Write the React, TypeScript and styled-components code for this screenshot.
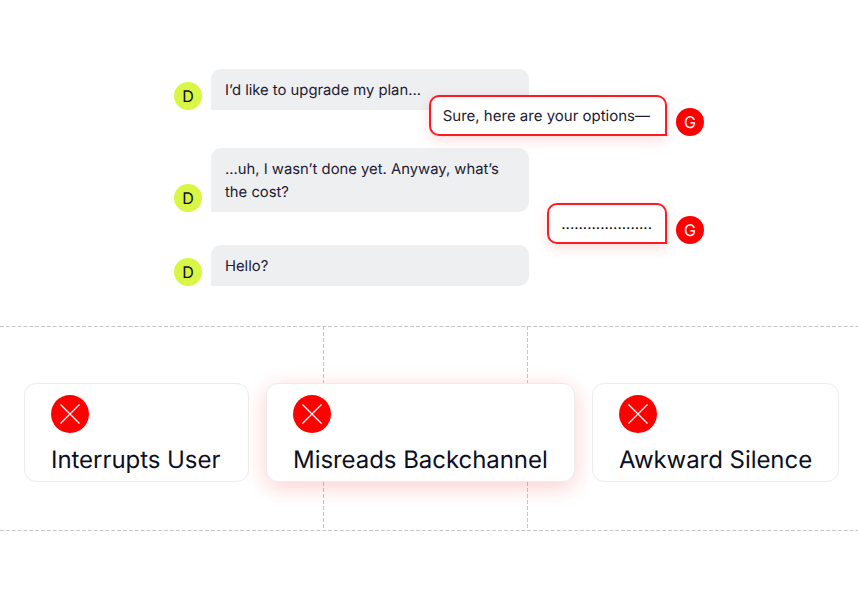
import React from 'react';
import styled, { createGlobalStyle, css } from 'styled-components';

const GlobalStyle = createGlobalStyle`
  html, body {
    margin: 0;
    padding: 0;
    background: #ffffff;
    font-family: Inter, "Liberation Sans", sans-serif;
    text-rendering: geometricPrecision;
  }
`;

const dashX = css`
  linear-gradient(to right, #c6c6c6 4px, transparent 4px)
`;

const dashY = css`
  linear-gradient(to bottom, #c6c6c6 4px, transparent 4px)
`;

const Page = styled.div`
  width: 858px;
  height: 600px;
  overflow: hidden;
`;

const Chat = styled.div`
  height: 326px;
  box-sizing: border-box;
  padding: 69px 0 0 174px;
  display: flex;
  flex-direction: column;
`;

const Row = styled.div<{ $top: number; $agent?: boolean }>`
  width: 530px;
  margin-top: ${(p) => p.$top}px;
  display: flex;
  align-items: flex-end;
  justify-content: ${(p) => (p.$agent ? 'flex-end' : 'flex-start')};
  gap: 9px;
  position: relative;
  z-index: ${(p) => (p.$agent ? 2 : 1)};
`;

const Avatar = styled.div<{ $agent?: boolean }>`
  width: 28px;
  height: 28px;
  flex: none;
  border-radius: 50%;
  display: flex;
  align-items: center;
  justify-content: center;
  font-size: 16px;
  background: ${(p) => (p.$agent ? '#ff0000' : '#d9f545')};
  color: ${(p) => (p.$agent ? '#ffffff' : '#0b0f1e')};
`;

const UserBubble = styled.div`
  width: 318px;
  box-sizing: border-box;
  padding: 10px 14px 8px;
  background: #eeeff1;
  border-radius: 10px 10px 10px 0;
  font-size: 14.8px;
  line-height: 23px;
  color: #1c2033;
`;

const AgentBubble = styled.div<{ $silent?: boolean }>`
  box-sizing: border-box;
  height: 41px;
  padding: 0 ${(p) => (p.$silent ? 13 : 15)}px 0 12px;
  display: flex;
  align-items: center;
  background: #ffffff;
  border: 2px solid #ff1a20;
  border-radius: 10px 10px 0 10px;
  box-shadow: 0 4px 14px rgba(255, 0, 0, 0.14);
  font-size: 15px;
  color: ${(p) => (p.$silent ? '#000000' : '#1c2033')};
  white-space: nowrap;
`;

const Issues = styled.div`
  position: relative;
  height: 205px;
  box-sizing: border-box;
  padding: 57px 19px 0 24px;
  display: flex;
  align-items: flex-start;
  gap: 17px;
  background-image: ${dashX}, ${dashX};
  background-size: 5.86px 1px;
  background-repeat: repeat-x;
  background-position: 0 0, 0 100%;

  &::before {
    content: '';
    position: absolute;
    top: 0;
    bottom: 0;
    left: 323px;
    width: 205px;
    background-image: ${dashY}, ${dashY};
    background-size: 1px 6px;
    background-repeat: repeat-y;
    background-position: 0 0, 100% 0;
  }
`;

const Card = styled.div<{ $width: number; $active?: boolean }>`
  position: relative;
  width: ${(p) => p.$width}px;
  height: 99px;
  box-sizing: border-box;
  padding: 11px 0 0 26px;
  background: #ffffff;
  border: 1px solid #ebecef;
  border-radius: 12px;
  box-shadow: ${(p) => (p.$active ? '0 5px 22px rgba(255, 0, 0, 0.2)' : 'none')};
`;

const CrossBadge = styled.div`
  width: 38px;
  height: 38px;
  border-radius: 50%;
  background: #ff0000;
  display: flex;
  align-items: center;
  justify-content: center;
`;

const CardTitle = styled.div`
  margin-top: 12px;
  font-size: 24px;
  line-height: 30px;
  letter-spacing: -0.05px;
  color: #0b0f23;
  white-space: nowrap;
`;

const Cross = () => (
  <svg width="20" height="20" viewBox="0 0 20 20" fill="none">
    <path d="M0.5 0.5L19.5 19.5M19.5 0.5L0.5 19.5" stroke="#ffffff" strokeWidth="1.2" />
  </svg>
);

const issues = [
  { title: 'Interrupts User', width: 225 },
  { title: 'Misreads Backchannel', width: 309, active: true },
  { title: 'Awkward Silence', width: 247 },
];

export default function App() {
  return (
    <Page>
      <GlobalStyle />
      <Chat>
        <Row $top={0}>
          <Avatar>D</Avatar>
          <UserBubble>I’d like to upgrade my plan...</UserBubble>
        </Row>
        <Row $top={-15} $agent>
          <AgentBubble>Sure, here are your options—</AgentBubble>
          <Avatar $agent>G</Avatar>
        </Row>
        <Row $top={12}>
          <Avatar>D</Avatar>
          <UserBubble>...uh, I wasn’t done yet. Anyway, what’s the cost?</UserBubble>
        </Row>
        <Row $top={-9} $agent>
          <AgentBubble $silent>.....................</AgentBubble>
          <Avatar $agent>G</Avatar>
        </Row>
        <Row $top={1}>
          <Avatar>D</Avatar>
          <UserBubble>Hello?</UserBubble>
        </Row>
      </Chat>
      <Issues>
        {issues.map((issue) => (
          <Card key={issue.title} $width={issue.width} $active={issue.active}>
            <CrossBadge>
              <Cross />
            </CrossBadge>
            <CardTitle>{issue.title}</CardTitle>
          </Card>
        ))}
      </Issues>
    </Page>
  );
}
